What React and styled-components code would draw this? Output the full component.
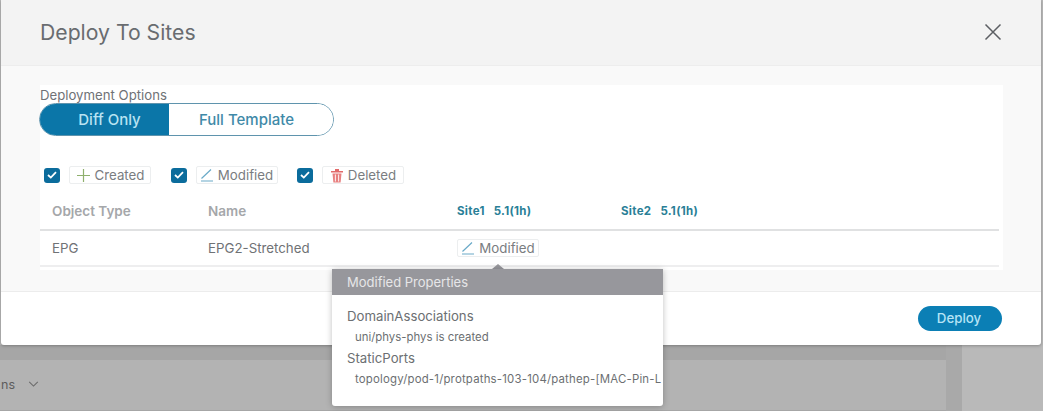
import React from "react";
import styled, { createGlobalStyle } from "styled-components";

const GlobalStyle = createGlobalStyle`
  html, body {
    margin: 0;
    padding: 0;
    height: 100%;
    overflow: hidden;
    background: #b5b5b5;
    font-family: Inter, "Liberation Sans", sans-serif;
  }
`;

const Page = styled.div`
  width: 1043px;
  height: 411px;
  display: flex;
  flex-direction: column;
  overflow: hidden;
  background: #b7b7b7;
`;

const Modal = styled.div`
  width: 1040px;
  height: 345px;
  margin-left: 1px;
  flex: none;
  display: flex;
  flex-direction: column;
  background: #fff;
  border-radius: 0 0 3px 3px;
  box-shadow: 0 1px 3px rgba(0, 0, 0, 0.25);
  position: relative;
  z-index: 1;
`;

const ModalHeader = styled.header`
  height: 66px;
  flex: none;
  display: flex;
  align-items: center;
  justify-content: space-between;
  padding: 0 39px 2px 39px;
  background: #f3f3f3;
  border-bottom: 1px solid #ededed;
  box-sizing: border-box;
`;

const Title = styled.h1`
  margin: 0;
  font-size: 21.2px;
  font-weight: 400;
  color: #696c70;
`;

const CloseButton = styled.button`
  width: 18px;
  height: 18px;
  padding: 0;
  border: 0;
  background: none;
  display: flex;
  color: #5c5f63;
`;

const ModalBody = styled.div`
  flex: 1;
  background: #f9f9f9;
  padding: 19px 38px 21px 39px;
  border-bottom: 1px solid #ececec;
  box-sizing: border-box;
`;

const Card = styled.section`
  height: 185px;
  background: #fff;
  box-sizing: border-box;
  padding-top: 3px;
`;

const OptionLabel = styled.div`
  font-size: 13.2px;
  line-height: 15px;
  color: #6f7276;
`;

const Toggle = styled.div`
  display: flex;
  width: 295px;
  height: 33px;
  margin-left: -1px;
  box-sizing: border-box;
  border-radius: 17px;
  overflow: hidden;
  border: 1px solid #5f94ad;
`;

const ToggleOption = styled.div`
  width: ${(p) => (p.$active ? "129px" : "auto")};
  flex: ${(p) => (p.$active ? "none" : "1")};
  box-sizing: border-box;
  padding: ${(p) => (p.$active ? "0 0 0 10px" : "0 9px 0 0")};
  display: flex;
  align-items: center;
  justify-content: center;
  font-size: 15px;
  font-weight: 500;
  background: ${(p) => (p.$active ? "#0b76a8" : "#fff")};
  color: ${(p) => (p.$active ? "#b9e3f2" : "#3f8aa8")};
`;

const FilterRow = styled.div`
  display: flex;
  align-items: center;
  gap: 19.5px;
  margin: 29px 0 0 4px;
  height: 20px;
`;

const Filter = styled.label`
  display: flex;
  align-items: center;
  gap: 9px;
`;

const Check = styled.span`
  width: 16px;
  height: 15px;
  border-radius: 3px;
  background: #0b6c9c;
  display: flex;
  align-items: center;
  justify-content: center;
  color: #fff;
`;

const Chip = styled.span`
  width: 82px;
  height: 18px;
  box-sizing: border-box;
  display: inline-flex;
  align-items: center;
  justify-content: center;
  gap: 4px;
  border: 1px solid #eceeef;
  border-radius: 2px;
  background: #fff;
  font-size: 13.3px;
  color: #7a7d81;
  white-space: nowrap;
`;

const Grid = styled.div`
  display: grid;
  grid-template-columns: 156px 249px 164px 1fr;
  width: 959px;
  padding-left: 12px;
  box-sizing: border-box;
  align-items: center;
`;

const HeadRow = styled(Grid)`
  height: 37px;
  margin-top: 9px;
  padding-bottom: 2px;
  border-bottom: 2px solid #e0e1e2;
`;

const BodyRow = styled(Grid)`
  height: 36px;
  border-bottom: 2px solid #eeeeef;
`;

const HeadCell = styled.div`
  font-size: 13.5px;
  font-weight: 600;
  color: #a5a7aa;
`;

const SiteCell = styled.div`
  font-size: 11.5px;
  font-weight: 700;
  letter-spacing: 0.3px;
  word-spacing: 1.5px;
  color: #2a7f97;
  white-space: pre;
`;

const Cell = styled.div`
  font-size: 13.3px;
  color: #6f7275;
`;

const ModalFooter = styled.footer`
  height: 54px;
  flex: none;
  display: flex;
  align-items: center;
  justify-content: flex-end;
  padding: 0 39px 2px 0;
  box-sizing: border-box;
`;

const DeployButton = styled.button`
  width: 84px;
  height: 25px;
  border: 0;
  border-radius: 13px;
  background: #0b7fb5;
  color: #b5e4f5;
  font-family: inherit;
  font-size: 13.3px;
  font-weight: 500;
  padding: 0 2px 0 0;
`;

const Popover = styled.div`
  position: absolute;
  left: 331px;
  top: 269px;
  width: 331px;
  height: 137px;
  background: #fff;
  border-radius: 0 0 3px 3px;
  box-shadow: 0 1px 6px rgba(0, 0, 0, 0.25);
  overflow: hidden;
`;

const Arrow = styled.div`
  position: absolute;
  left: 491px;
  top: 264px;
  width: 0;
  height: 0;
  border-left: 6px solid transparent;
  border-right: 6px solid transparent;
  border-bottom: 5px solid #97979c;
`;

const PopoverHeader = styled.div`
  height: 26px;
  background: #97979c;
  color: #e6e6e8;
  font-size: 13px;
  display: flex;
  align-items: center;
  padding-left: 15px;
`;

const PopoverBody = styled.div`
  padding: 11px 0 0 15px;
  white-space: nowrap;
`;

const PropName = styled.div`
  font-size: 13.2px;
  line-height: 21px;
  color: #6c6f72;
`;

const PropValue = styled.div`
  font-size: 11.4px;
  line-height: 21px;
  padding-left: 8px;
  letter-spacing: ${(p) => (p.$wide ? "0.2px" : "0")};
  color: #6c6f72;
`;

const Backdrop = styled.div`
  flex: 1;
  display: flex;
  background: #a6a6a6;
`;

const BackdropMain = styled.div`
  width: 946px;
  margin-top: 15px;
  background: #b3b3b3;
  display: flex;
  align-items: center;
  height: 50px;
  padding-bottom: 2px;
  padding-left: 1px;
  gap: 13px;
  box-sizing: border-box;
  font-size: 12.5px;
  color: #5d5d5d;
`;

const BackdropGutter = styled.div`
  width: 16px;
  background: #a9a9a9;
`;

const BackdropSide = styled.div`
  flex: 1;
  background: #b9b9b9;
`;

const CloseIcon = () => (
  <svg width="18" height="18" viewBox="0 0 18 18" fill="none" stroke="currentColor" strokeWidth="1.5">
    <path d="M1.5 1.5 L16.5 16.5 M16.5 1.5 L1.5 16.5" />
  </svg>
);

const CheckMark = () => (
  <svg width="10" height="8" viewBox="0 0 10 8" fill="none" stroke="currentColor" strokeWidth="1.8">
    <path d="M1 4 L3.8 6.6 L9 1.2" />
  </svg>
);

const PlusIcon = () => (
  <svg width="15" height="15" viewBox="0 0 15 15" stroke="#8fb06d" strokeWidth="1.2" fill="none">
    <path d="M7.5 1 V14 M1 7.5 H14" />
  </svg>
);

const EditIcon = () => (
  <svg width="14" height="14" viewBox="0 0 14 14" stroke="#6aaac8" strokeWidth="1.2" fill="none">
    <path d="M1.5 10.5 L11 1.5 M1 13 H13" />
  </svg>
);

const TrashIcon = () => (
  <svg width="14" height="15" viewBox="0 0 14 15">
    <path d="M1 3 H13 V4.6 H1 Z M5 1 H9 V3 H5 Z" fill="#e26a6a" />
    <path d="M2.5 5.5 H11.5 L10.6 14.5 H3.4 Z" fill="#e88080" />
    <path d="M5.4 6.5 V13.5 M8.6 6.5 V13.5" stroke="#fff" strokeWidth="0.9" />
  </svg>
);

const Chevron = () => (
  <svg width="11" height="6" viewBox="0 0 12 7" fill="none" stroke="#6a6a6a" strokeWidth="1.2">
    <path d="M1 1 L6 6 L11 1" />
  </svg>
);

const filters = [
  { label: "Created", icon: <PlusIcon /> },
  { label: "Modified", icon: <EditIcon /> },
  { label: "Deleted", icon: <TrashIcon /> },
];

export default function App() {
  return (
    <Page>
      <GlobalStyle />
      <Modal>
        <ModalHeader>
          <Title>Deploy To Sites</Title>
          <CloseButton aria-label="Close">
            <CloseIcon />
          </CloseButton>
        </ModalHeader>
        <ModalBody>
          <Card>
            <OptionLabel>Deployment Options</OptionLabel>
            <Toggle>
              <ToggleOption $active>Diff Only</ToggleOption>
              <ToggleOption>Full Template</ToggleOption>
            </Toggle>
            <FilterRow>
              {filters.map((f) => (
                <Filter key={f.label}>
                  <Check>
                    <CheckMark />
                  </Check>
                  <Chip>
                    {f.icon}
                    {f.label}
                  </Chip>
                </Filter>
              ))}
            </FilterRow>
            <HeadRow>
              <HeadCell>Object Type</HeadCell>
              <HeadCell>Name</HeadCell>
              <SiteCell>Site1  5.1(1h)</SiteCell>
              <SiteCell>Site2  5.1(1h)</SiteCell>
            </HeadRow>
            <BodyRow>
              <Cell>EPG</Cell>
              <Cell>EPG2-Stretched</Cell>
              <Cell>
                <Chip>
                  <EditIcon />
                  Modified
                </Chip>
              </Cell>
              <Cell />
            </BodyRow>
          </Card>
        </ModalBody>
        <ModalFooter>
          <DeployButton>Deploy</DeployButton>
        </ModalFooter>
        <Arrow />
        <Popover>
          <PopoverHeader>Modified Properties</PopoverHeader>
          <PopoverBody>
            <PropName>DomainAssociations</PropName>
            <PropValue>uni/phys-phys is created</PropValue>
            <PropName>StaticPorts</PropName>
            <PropValue $wide>topology/pod-1/protpaths-103-104/pathep-[MAC-Pin-L</PropValue>
          </PopoverBody>
        </Popover>
      </Modal>
      <Backdrop>
        <BackdropMain>
          ns <Chevron />
        </BackdropMain>
        <BackdropGutter />
        <BackdropSide />
      </Backdrop>
    </Page>
  );
}
